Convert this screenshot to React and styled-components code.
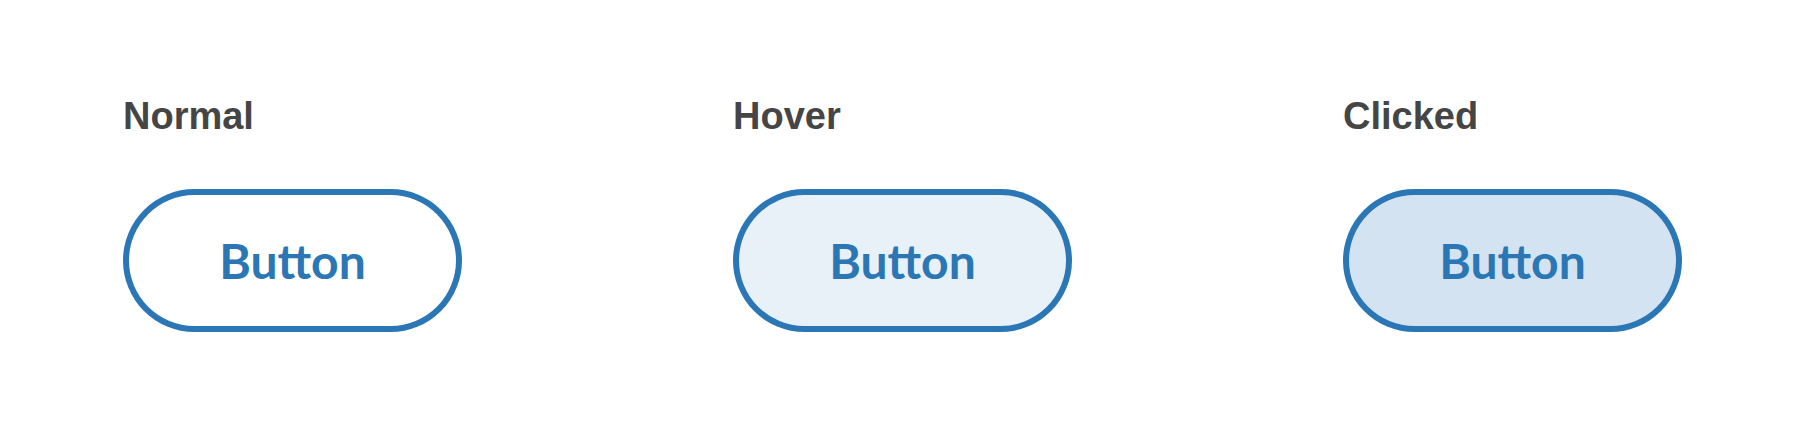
import React from 'react';
import styled, { createGlobalStyle } from 'styled-components';

const GlobalStyle = createGlobalStyle`
  html, body {
    margin: 0;
    padding: 0;
    background: #ffffff;
  }
`;

const Page = styled.div`
  box-sizing: border-box;
  height: 423px;
  padding: 97px 0 0 123px;
  display: flex;
  gap: 271px;
`;

const State = styled.div`
  display: flex;
  flex-direction: column;
  align-items: flex-start;
  gap: 54px;
`;

const Label = styled.h2`
  margin: 0;
  font-family: "Liberation Sans", Arial, sans-serif;
  font-weight: 700;
  font-size: 38px;
  line-height: 38px;
  color: #454545;
`;

const fills = {
  normal: '#ffffff',
  hover: '#e8f0f8',
  clicked: '#d3e3f1',
};

// the outline is the button's own background showing round the face
const Button = styled.button`
  appearance: none;
  box-sizing: border-box;
  width: 339px;
  height: 143px;
  flex: none;
  display: flex;
  padding: 6px;
  margin: 0;
  border: none;
  background: #2b76b4;
  clip-path: inset(0 round 71.5px);
  cursor: pointer;
`;

const Face = styled.span`
  flex: 1;
  display: flex;
  align-items: center;
  justify-content: center;
  background: ${(p) => fills[p.$variant]};
  clip-path: inset(0 round 65.5px);
  color: #2b76b4;
  font-family: Lato, "Open Sans", sans-serif;
  font-weight: 700;
  font-size: 48px;
  line-height: 1;
`;

const states = [
  { label: 'Normal', variant: 'normal' },
  { label: 'Hover', variant: 'hover' },
  { label: 'Clicked', variant: 'clicked' },
];

const App = () => (
  <>
    <GlobalStyle />
    <Page>
      {states.map((s) => (
        <State key={s.variant}>
          <Label>{s.label}</Label>
          <Button>
            <Face $variant={s.variant}>Button</Face>
          </Button>
        </State>
      ))}
    </Page>
  </>
);

export default App;
